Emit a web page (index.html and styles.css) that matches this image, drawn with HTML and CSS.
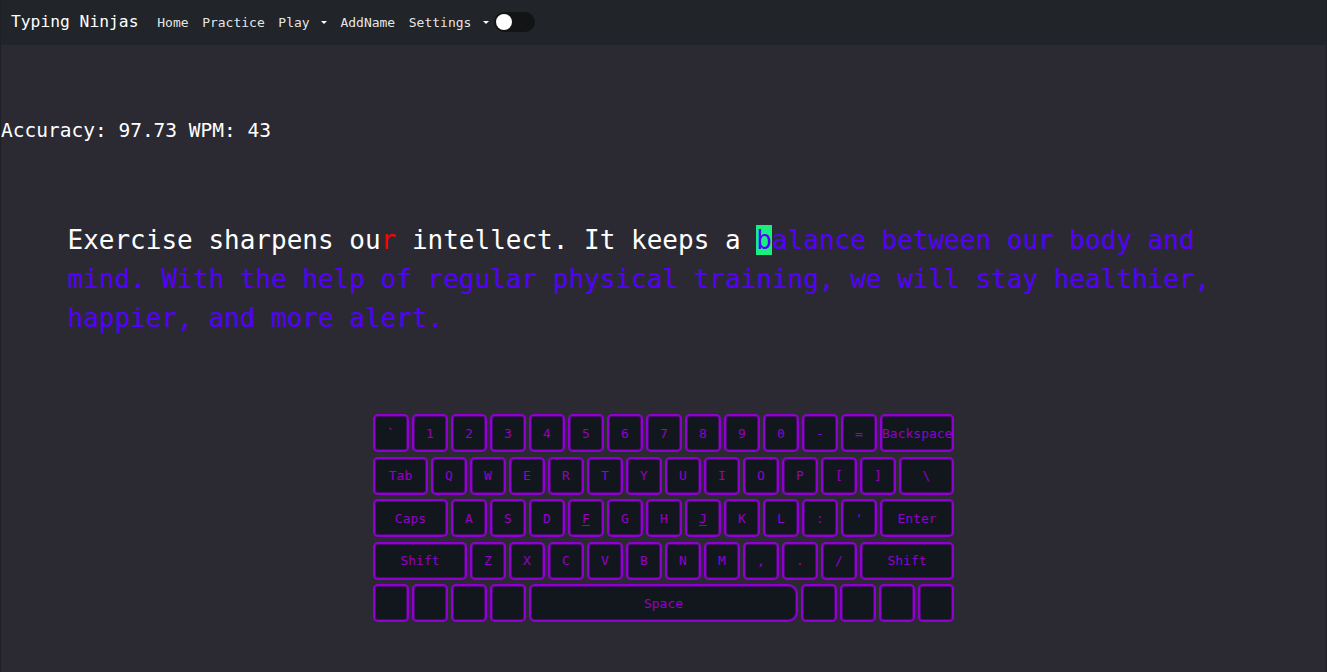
FILE: index.html
```html
<!DOCTYPE html>
<html lang="en">
<head>
<meta charset="utf-8">
<title>Typing Ninjas</title>
<link rel="stylesheet" href="styles.css">
</head>
<body>
<nav class="navbar">
  <a class="brand" href="#">Typing Ninjas</a>
  <ul class="nav">
    <li><a class="nav-link" href="#">Home</a></li>
    <li><a class="nav-link" href="#">Practice</a></li>
    <li><a class="nav-link dropdown" href="#">Play <span class="caret"></span></a></li>
    <li><a class="nav-link" href="#">AddName</a></li>
    <li><a class="nav-link dropdown settings" href="#">Settings <span class="caret"></span></a></li>
  </ul>
  <span class="switch"><span class="knob"></span></span>
</nav>
<main class="page">
  <div class="stats">Accuracy: 97.73 WPM: 43</div>
  <p class="passage"><span class="typed">Exercise sharpens ou</span><span class="wrong">r</span><span class="typed"> intellect. It keeps a </span><span class="current">b</span><span class="pending">alance between our body and mind. With the help of regular physical training, we will stay healthier, happier, and more alert.</span></p>
  <div class="keyboard">
    <div class="row">
      <span class="key">`</span><span class="key">1</span><span class="key">2</span><span class="key">3</span><span class="key">4</span><span class="key">5</span><span class="key">6</span><span class="key">7</span><span class="key">8</span><span class="key">9</span><span class="key">0</span><span class="key">-</span><span class="key">=</span><span class="key fill">Backspace</span>
    </div>
    <div class="row">
      <span class="key w55">Tab</span><span class="key">Q</span><span class="key">W</span><span class="key">E</span><span class="key">R</span><span class="key">T</span><span class="key">Y</span><span class="key">U</span><span class="key">I</span><span class="key">O</span><span class="key">P</span><span class="key">[</span><span class="key">]</span><span class="key fill">\</span>
    </div>
    <div class="row">
      <span class="key w74">Caps</span><span class="key">A</span><span class="key">S</span><span class="key">D</span><span class="key"><u>F</u></span><span class="key">G</span><span class="key">H</span><span class="key"><u>J</u></span><span class="key">K</span><span class="key">L</span><span class="key">:</span><span class="key">'</span><span class="key fill">Enter</span>
    </div>
    <div class="row">
      <span class="key w94">Shift</span><span class="key">Z</span><span class="key">X</span><span class="key">C</span><span class="key">V</span><span class="key">B</span><span class="key">N</span><span class="key">M</span><span class="key">,</span><span class="key">.</span><span class="key">/</span><span class="key fill">Shift</span>
    </div>
    <div class="row">
      <span class="key"></span><span class="key"></span><span class="key"></span><span class="key"></span><span class="key fill space">Space</span><span class="key"></span><span class="key"></span><span class="key"></span><span class="key"></span>
    </div>
  </div>
</main>
</body>
</html>
```

FILE: styles.css
```css
html, body {
  margin: 0;
  padding: 0;
}

body {
  background: #2b2a33;
  font-family: "DejaVu Sans Mono", monospace;
  color: #ffffff;
  min-height: 672px;
  border-left: 1px solid #1f1f25;
  border-right: 1px solid #1f1f25;
  box-sizing: border-box;
}

.navbar {
  height: 45px;
  box-sizing: border-box;
  padding: 0 0 2px 11px;
  background: #212529;
  display: flex;
  align-items: center;
  margin-left: -1px;
  margin-right: -1px;
}

.brand {
  color: #ffffff;
  text-decoration: none;
  font-size: 16.3px;
  margin-right: 12px;
}

.nav {
  list-style: none;
  margin: 0;
  padding: 0;
  display: flex;
}

.nav-link {
  color: rgba(255, 255, 255, 0.9);
  text-decoration: none;
  font-size: 13px;
  padding: 0 6.8px;
  white-space: pre;
}

.nav li:first-child .nav-link {
  padding-left: 6.8px;
}

.settings {
  padding-right: 5px;
}

.caret {
  display: inline-block;
  margin-left: 0.255em;
  vertical-align: 0.255em;
  border-top: 0.3em solid #ffffff;
  border-right: 0.3em solid transparent;
  border-left: 0.3em solid transparent;
  border-bottom: 0;
}

.switch {
  width: 41px;
  height: 20px;
  border-radius: 10px;
  background: #121416;
  display: flex;
  align-items: center;
  padding-left: 2px;
  box-sizing: border-box;
}

.knob {
  width: 16px;
  height: 16px;
  border-radius: 50%;
  background: #ffffff;
}

.page {
  padding-top: 74px;
}

.stats {
  font-size: 19.5px;
  line-height: 24px;
  white-space: pre;
}

.passage {
  margin: 77.5px 0 0;
  padding: 0 66.5px;
  font-size: 26px;
  line-height: 39px;
}

.typed {
  color: #ffffff;
}

.wrong {
  color: #ff0000;
}

.current {
  color: #5500ff;
  background: #18ef7e;
}

.pending {
  color: #5500ff;
}

.keyboard {
  width: 581px;
  margin: 76.5px auto 0;
  display: flex;
  flex-direction: column;
  gap: 4.5px;
}

.row {
  display: flex;
  gap: 3px;
}

.key {
  width: 36px;
  height: 38px;
  flex: 0 0 auto;
  box-sizing: border-box;
  border: 2px solid #9000d2;
  border-radius: 5px;
  background: #12171d;
  box-shadow: inset 0 0 0 1px #4a0a6e;
  color: #9400cc;
  font-size: 13px;
  display: flex;
  align-items: center;
  justify-content: center;
  white-space: pre;
}

.key u {
  text-underline-offset: 2px;
}

.w55 { width: 55px; }
.w74 { width: 75px; }
.w94 { width: 94px; }

.fill {
  flex: 1 1 auto;
  width: auto;
}

.space {
  border-radius: 6px 10px 10px 6px;
}
```
